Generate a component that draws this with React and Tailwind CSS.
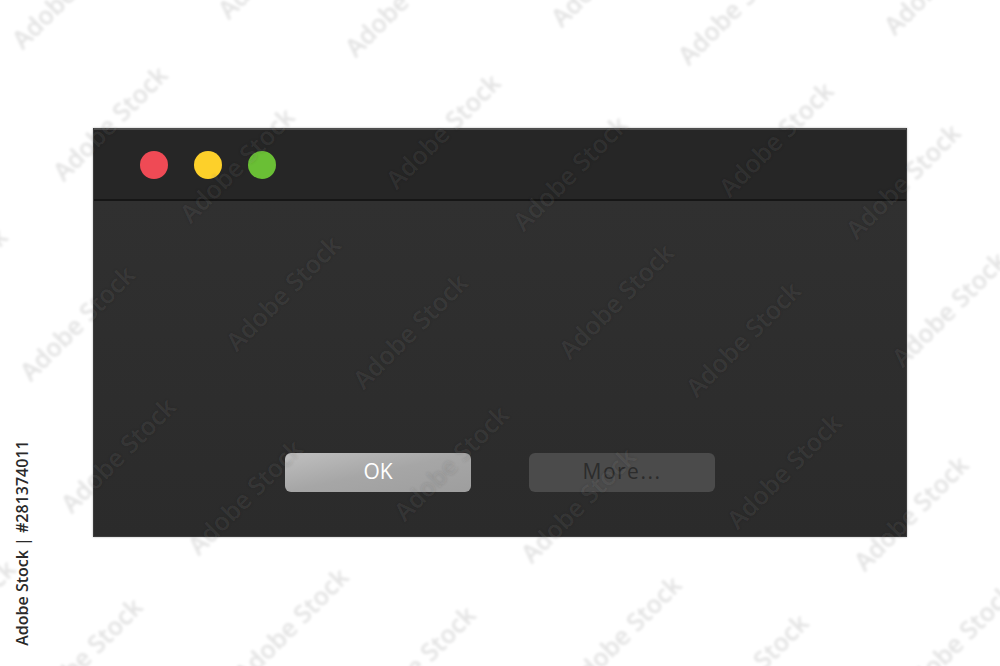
const P = [
  [110, 123],
  [237, 165],
  [77, 323],
  [283, 293],
];

const marks = [];
for (let i = -1; i <= 3; i++) {
  for (let j = -1; j <= 2; j++) {
    for (const [px, py] of P) {
      const x = px + i * 333 + j * 8;
      const y = py + i * 8 + j * 332;
      if (x > -90 && x < 1090 && y > -90 && y < 756) marks.push([x, y]);
    }
  }
}

export default function App() {
  return (
    <div className="relative w-[1000px] h-[666px] bg-white overflow-hidden" style={{ fontFamily: '"Open Sans", "Liberation Sans", sans-serif' }}>
      <div className="pt-[128px] pl-[93px]">
        <div className="w-[814px] h-[409px] flex flex-col bg-[#2d2d2d] border-x border-b border-[#3c3c3c] shadow-[0_0_2px_rgba(0,0,0,0.3)]">
          <div className="h-[71px] bg-[#262626] border-t-2 border-[#4e4e4e] flex items-center gap-[26px] pl-[46px] pt-[1px]">
            <div className="w-[28px] h-[28px] rounded-full bg-[#ef4a55]" />
            <div className="w-[28px] h-[28px] rounded-full bg-[#fdd02a]" />
            <div className="w-[28px] h-[28px] rounded-full bg-[#6abf35]" />
          </div>
          <div className="h-[2px] bg-[#161616]" />
          <div className="flex-1 flex items-end justify-center gap-[58px] pb-[44px] bg-gradient-to-b from-[#303030] to-[#2b2b2b]">
            <div className="w-[186px] h-[39px] rounded-[6px] bg-gradient-to-br from-[#c0c0c0] via-[#a6a6a6] to-[#9e9e9e] flex items-center justify-center text-white text-[21px] pb-[1px]">
              OK
            </div>
            <div className="w-[186px] h-[39px] rounded-[6px] bg-[#4b4b4b] flex items-center justify-center text-[#2c2c2c] text-[21px] tracking-[1.5px] pb-[1px]">
              More...
            </div>
          </div>
        </div>
      </div>

      <div className="absolute inset-0 pointer-events-none">
        {marks.map(([x, y], k) => (
          <div
            key={k}
            className="absolute w-0 h-0"
            style={{ left: x, top: y }}
          >
            <div className="absolute left-0 top-0 -translate-x-1/2 -translate-y-1/2 -rotate-45 whitespace-nowrap text-[25px] font-semibold text-white/[0.08] [text-shadow:0_0_3px_rgba(0,0,0,0.12)]">
              Adobe Stock
            </div>
          </div>
        ))}
      </div>

      <div className="absolute left-[22px] top-[543px] -translate-x-1/2 -translate-y-1/2 -rotate-90 whitespace-nowrap text-[16px] font-semibold text-[#2a2a2a]">
        Adobe Stock | #281374011
      </div>
    </div>
  );
}
